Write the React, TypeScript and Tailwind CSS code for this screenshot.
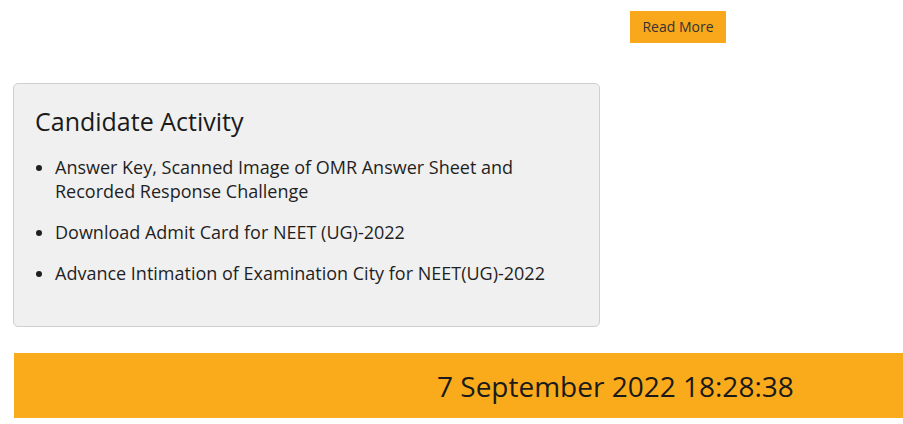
export default function App() {
  const items = [
    "Answer Key, Scanned Image of OMR Answer Sheet and Recorded Response Challenge",
    "Download Admit Card for NEET (UG)-2022",
    "Advance Intimation of Examination City for NEET(UG)-2022",
  ];

  return (
    <div className="min-h-screen bg-white font-['Open_Sans',sans-serif] text-[#222]">
      <div className="flex pt-[11px] pl-[630px]">
        <button className="h-[32px] w-[96px] bg-[#f9a81b] text-[14px] leading-[30px] text-[#333]">
          Read More
        </button>
      </div>

      <div className="mt-[40px] ml-[13px] h-[244px] w-[587px] rounded-[5px] border border-[#cfcfcf] bg-[#f0f0f0] px-[21px] pt-[19px]">
        <h3 className="text-[25px] leading-[36px] text-[#1a1a1a]">Candidate Activity</h3>
        <ul className="mt-[16px] flex flex-col gap-[17px] pl-[20px] pr-[20px]">
          {items.map((t) => (
            <li key={t} className="list-disc text-[18px] leading-[24px] text-[#1f1f1f]">
              {t}
            </li>
          ))}
        </ul>
      </div>

      <div className="mt-[26px] ml-[14px] flex h-[65px] items-center bg-[#f9ab1c] pl-[423px]">
        <span className="text-[28px] text-[#1a1a1a]">7 September 2022 18:28:38</span>
      </div>
    </div>
  );
}
